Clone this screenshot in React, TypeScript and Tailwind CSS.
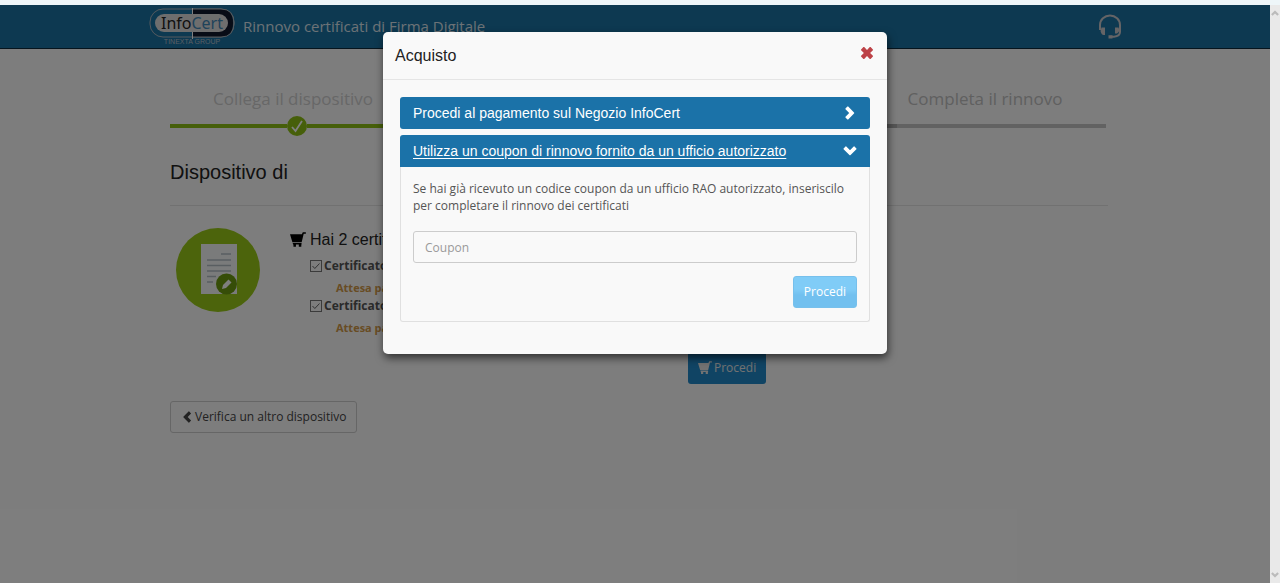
import { useState } from 'react';

const certificates = [
  { id: 'cert-1', name: 'Certificato', status: 'Attesa pagamento' },
  { id: 'cert-2', name: 'Certificato', status: 'Attesa pagamento' },
];

const CartIcon = ({ className }: { className?: string }) => (
  <svg viewBox="0 0 14 14" className={className} fill="currentColor" aria-hidden="true">
    <path d="M0 2h10.400L11.200.3h2.400c.5 0 .5 1.300 0 1.300H12L10.200 9H2.100zM2.300 9.600h7.800v1.300H2.800zM3 10.800h2.200V13H3zM7.700 10.800h2.200V13H7.700z" />
  </svg>
);

const ChevronIcon = ({ className }: { className?: string }) => (
  <svg viewBox="0 0 14 14" className={className} fill="currentColor" aria-hidden="true">
    <path d="M5.200.6 11 6.400q.6.600 0 1.200l-5.800 5.800q-.4.400-.8 0L2.500 11.500q-.4-.4 0-.8L6.200 7 2.500 3.300q-.4-.4 0-.8L4.400.6q.4-.4.8 0z" />
  </svg>
);

const CloseIcon = () => (
  <svg viewBox="0 0 14 14" className="size-3.5" fill="currentColor" aria-hidden="true">
    <path d="M4.200 1.100 7 3.900l2.800-2.800q.4-.4.800 0l2.300 2.300q.4.400 0 .8L10.100 7l2.800 2.800q.4.400 0 .8l-2.300 2.300q-.4.400-.8 0L7 10.100l-2.800 2.800q-.4.400-.8 0l-2.300-2.300q-.4-.4 0-.8L3.900 7 1.100 4.200q-.4-.4 0-.8l2.300-2.300q.4-.4.800 0z" />
  </svg>
);

const HeadsetIcon = () => (
  <svg viewBox="0 0 24 26" className="h-[26px] w-6" aria-hidden="true">
    <path d="M2 16V11a10 9.500 0 0 1 20 0v7q0 4-6 4.800h-4" fill="none" stroke="currentColor" strokeWidth="2" />
    <path d="M3.500 13.500H7V21H5.500Q3.500 21 2.500 17zM20.500 13.500H17V19.500h2q1.500-1 2.500-3zM10.500 21.300h4v3.200h-4z" fill="currentColor" />
  </svg>
);

const Logo = () => (
  <div className="w-[86px] pt-px text-center text-[#b5bfc9]">
    <div className="relative h-[30px]">
      <svg viewBox="0 0 86 31" className="h-[31px] w-[86px]" aria-hidden="true">
        <rect x="1" y="1" width="84" height="28" rx="13" fill="none" stroke="#a9b4bd" />
        <path d="M44 1h28q12 0 12 14T72 29H44z" fill="#10182c" />
        <path d="M44 1h28q13 0 13 14T72 29H44" fill="none" stroke="#a9b4bd" />
        <rect x="6" y="6" width="73" height="18" rx="9" fill="#ddd" />
        <path d="M43.500 0v6M43.500 24v7" stroke="#fff" />
      </svg>
      <span className="absolute inset-x-0 top-0 text-center font-['Noto_Sans'] text-base leading-[30px] text-[#222]">
        Info<span className="text-[#3f86b5]">Cert</span>
      </span>
    </div>
    <p className="font-['Liberation_Sans'] text-[7px] leading-2">TINEXTA GROUP</p>
  </div>
);

const DocumentBadge = () => (
  <svg viewBox="0 0 84 84" className="size-[84px] shrink-0" aria-hidden="true">
    <circle cx="42" cy="42" r="42" fill="#98c818" />
    <path d="M25 16h36v50H25z" fill="#f5f7f7" />
    <path d="M45 26h10M31 32h24M31 37.500h24M31 43h24M31 48.500h9M31 54h6" stroke="#b3bdc3" strokeWidth="1.300" />
    <circle cx="50.500" cy="56" r="10.500" fill="#6d9b10" />
    <path d="m46 61 1-4 5.500-5.500 3 3L50 60z" fill="#fff" />
  </svg>
);

const Scrollbar = () => (
  <div className="flex w-2.5 shrink-0 flex-col justify-between bg-[#e9e9e9] py-1 text-[#bbb]">
    <ChevronIcon className="mx-auto size-2 -rotate-90" />
    <ChevronIcon className="mx-auto size-2 rotate-90" />
  </div>
);

const PurchaseDialog = () => {
  const [coupon, setCoupon] = useState('');

  return (
    <div
      role="dialog"
      aria-labelledby="dialog-title"
      className="w-[504px] rounded-[5px] bg-[#f9f9f9] shadow-[1px_4px_8px_rgba(0,0,0,0.6)]"
    >
      <div className="flex h-12 items-center justify-between border-b border-[#e5e5e5] px-3">
        <h2 id="dialog-title" className="font-['Liberation_Sans'] text-base text-[#222]">
          Acquisto
        </h2>
        <button type="button" aria-label="Chiudi" className="mb-1.5 mr-px text-[#bd4247]">
          <CloseIcon />
        </button>
      </div>

      <div className="flex flex-col gap-1.5 px-[17px] pb-8 pt-[17px]">
        <button
          type="button"
          className="flex h-8 items-center justify-between rounded-[3px] bg-[#1b72a8] px-[13px] font-['Liberation_Sans'] text-sm text-white"
        >
          Procedi al pagamento sul Negozio InfoCert
          <ChevronIcon className="size-3.5" />
        </button>

        <div>
          <button
            type="button"
            className="flex h-8 w-full items-center justify-between rounded-t-[3px] bg-[#1b72a8] px-[13px] font-['Liberation_Sans'] text-sm text-white"
          >
            <span className="underline underline-offset-2">
              Utilizza un coupon di rinnovo fornito da un ufficio autorizzato
            </span>
            <ChevronIcon className="size-3.5 rotate-90" />
          </button>
          <form className="rounded-b-[3px] border border-t-0 border-[#e0e0e0] px-3 pb-[13px] pt-[13px]">
            <label htmlFor="coupon" className="block text-xs leading-[17px] text-[#555]">
              Se hai già ricevuto un codice coupon da un ufficio RAO autorizzato, inseriscilo per completare il
              rinnovo dei certificati
            </label>
            <input
              id="coupon"
              type="text"
              placeholder="Coupon"
              value={coupon}
              onChange={(e) => setCoupon(e.target.value)}
              className="mt-[17px] block h-8 w-full rounded-[3px] border border-[#ccc] px-[11px] text-xs text-[#555] placeholder:text-[#999]"
            />
            <div className="mt-[13px] flex justify-end">
              <button
                type="button"
                className="h-8 rounded-[3px] border border-[#77c0ec] bg-linear-to-b from-[#80ccf7] from-40% to-[#72c0ef] to-60% px-2.5 text-xs text-white"
              >
                Procedi
              </button>
            </div>
          </form>
        </div>
      </div>
    </div>
  );
};

export default function App() {
  return (
    <div className="flex min-h-screen flex-col font-['Open_Sans',sans-serif]">
      <div className="h-[5px] bg-[#eef6f9]" />
      <div className="flex grow">
        <div className="relative grow bg-[#fbfbfb]">
          <header className="border-b border-[#0c2a3c] bg-[#1b72a2]">
            <div className="mx-auto flex h-[43px] max-w-[974px] items-center gap-2 pl-px">
              <Logo />
              <h1 className="grow text-[15px] text-[#d8e4ec]">Rinnovo certificati di Firma Digitale</h1>
              <button type="button" aria-label="Assistenza" className="text-[#c8c8cc]">
                <HeadsetIcon />
              </button>
            </div>
          </header>

          <main className="mx-auto max-w-[950px] pl-2.5 pr-0.5">
            <div className="flex justify-between pt-[38px] text-[17px] leading-6">
              <p className="w-[246px] text-center text-[#cfcfcf]">Collega il dispositivo</p>
              <p className="w-[246px] text-center text-[#c0c0c0]">Completa il rinnovo</p>
            </div>
            <div className="mt-[5px] flex items-center pr-0.5">
              <div className="h-1 w-[117px] bg-[#8dbf14]" />
              <svg viewBox="0 0 20 20" className="size-5" aria-hidden="true">
                <circle cx="10" cy="10" r="10" fill="#8dbf14" />
                <path d="m5 11 3.500 4L15 5" fill="none" stroke="#fff" strokeWidth="1.800" />
              </svg>
              <div className="h-1 w-[117px] bg-[#8dbf14]" />
              <div className="h-1 grow bg-[#ababab]" />
              <div className="h-1 w-[209px] bg-[#c4c4c4]" />
            </div>

            <h2 className="border-b border-[#e2e2e2] pb-[19px] pt-[22px] font-['Liberation_Sans'] text-xl text-[#222]">
              Dispositivo di
            </h2>

            <section className="flex gap-[30px] pl-1.5 pt-[22px]">
              <DocumentBadge />
              <div>
                <h3 className="flex items-center gap-1 font-['Liberation_Sans'] text-base text-[#222]">
                  <CartIcon className="size-4 text-black" />
                  Hai 2 certificati
                </h3>
                <ul className="mt-1 pl-5">
                  {certificates.map((cert) => (
                    <li key={cert.id}>
                      <label className="flex items-center gap-0.5 text-xs leading-5 font-bold text-[#555]">
                        <span className="relative size-3">
                          <input
                            type="checkbox"
                            defaultChecked
                            className="block size-3 appearance-none border border-[#777]"
                          />
                          <svg viewBox="0 0 12 12" className="absolute inset-0 size-3" aria-hidden="true">
                            <path d="m2.500 6 2.300 2.500L9.500 3.500" fill="none" stroke="#666" />
                          </svg>
                        </span>
                        {cert.name}
                      </label>
                      <p className="pl-[26px] pt-1 text-[11px] leading-4 font-bold text-[#d09848]">{cert.status}</p>
                    </li>
                  ))}
                </ul>
              </div>
            </section>

            <div className="mt-4 flex pl-[518px]">
              <button
                type="button"
                className="flex h-8 items-center gap-0.5 rounded-[3px] bg-[#2089c8] px-2.5 text-xs text-[#e4e4e4]"
              >
                <CartIcon className="size-3.5" />
                Procedi
              </button>
            </div>

            <button
              type="button"
              className="mt-[17px] flex h-8 items-center gap-0.5 rounded-[3px] border border-[#ccc] px-2.5 text-xs text-[#444]"
            >
              <ChevronIcon className="size-3 rotate-180" />
              Verifica un altro dispositivo
            </button>
          </main>

          <div className="absolute inset-0 flex items-start justify-center bg-black/50 pt-[27px]">
            <PurchaseDialog />
          </div>
        </div>
        <Scrollbar />
      </div>
    </div>
  );
}
